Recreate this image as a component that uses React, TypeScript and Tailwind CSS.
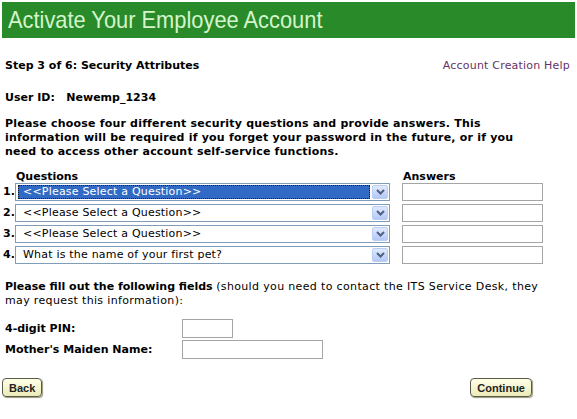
import React from "react";

const font = { fontFamily: '"DejaVu Sans", Verdana, sans-serif' };

function Chevron() {
  return (
    <svg width="9" height="6" viewBox="0 0 9 6">
      <path d="M1 1 L4.5 4.5 L8 1" stroke="#4d6185" strokeWidth="2" fill="none" />
    </svg>
  );
}

function Select({ text, active }: { text: string; active?: boolean }) {
  return (
    <div className="flex h-[18px] w-[375px] items-stretch border border-[#7f9db9] bg-white p-px">
      <div className="flex flex-1 items-center pl-[1px]">
        <div
          className={
            active
              ? "flex h-full w-full items-center border border-dotted border-[#1a1a1a] bg-[#316ac5] pl-[4px] tracking-[0.2px] text-white"
              : "flex h-full w-full items-center pl-[5px] tracking-[0.2px] text-black"
          }
        >
          {text}
        </div>
      </div>
      <div className="ml-[2px] flex w-[16px] items-center justify-center rounded-[2px] border border-[#b9cdf5] bg-gradient-to-b from-[#e1eafe] to-[#b4c8f6]">
        <Chevron />
      </div>
    </div>
  );
}

function Input({ w }: { w: string }) {
  return <div className={`h-[18px] border border-[#a5a5a5] bg-white ${w}`} />;
}

export default function App() {
  const qs = [
    "<<Please Select a Question>>",
    "<<Please Select a Question>>",
    "<<Please Select a Question>>",
    "What is the name of your first pet?",
  ];
  return (
    <div className="h-[419px] w-[577px] bg-white text-[11px] leading-[14px] text-black" style={font}>
      <div className="px-[2px] pt-[2px]">
        <div
          className="flex h-[36px] items-center overflow-hidden bg-[#288a28] pl-[6px] text-[#d4f5cc]"
          style={{ fontFamily: '"Liberation Sans", Arial, sans-serif' }}
        >
          <span className="origin-left scale-x-[0.91] whitespace-nowrap text-[24px]">
            Activate Your Employee Account
          </span>
        </div>
      </div>
      <div className="px-[5px]">
        <div className="mt-[21px] flex justify-between">
          <span className="font-bold">Step 3 of 6: Security Attributes</span>
          <span className="pr-[2px] tracking-[0.2px] text-[#663366]">Account Creation Help</span>
        </div>
        <div className="mt-[18px] font-bold">
          User ID:&nbsp;&nbsp;&nbsp;Newemp_1234
        </div>
        <p className="mt-[12px] font-bold tracking-[0.2px]">
          Please choose four different security questions and provide answers. This
          <br />
          information will be required if you forget your password in the future, or if you
          <br />
          need to access other account self-service functions.
        </p>
      </div>
      <div className="mt-[11px] pl-[3px]">
        <div className="flex font-bold leading-[13px]">
          <span className="w-[400px] pl-[13px]">Questions</span>
          <span>Answers</span>
        </div>
        <div className="flex flex-col gap-[3px]">
          {qs.map((q, i) => (
            <div key={i} className="flex items-center">
              <span className="w-[12px] font-bold">{i + 1}.</span>
              <Select text={q} active={i === 0} />
              <div className="ml-[12px]">
                <Input w="w-[141px]" />
              </div>
            </div>
          ))}
        </div>
      </div>
      <div className="px-[5px]">
        <p className="mt-[16px]">
          <b>Please fill out the following fields</b>{" "}
          <span className="tracking-[0.35px]">(should you need to contact the ITS Service Desk, they</span>
          <br />
          <span className="tracking-[0.35px]">may request this information):</span>
        </p>
        <div className="mt-[11px] flex items-center">
          <span className="w-[177px] font-bold">4-digit PIN:</span>
          <div className="h-[19px] w-[51px] border border-[#a5a5a5] bg-white" />
        </div>
        <div className="mt-[2px] flex items-center">
          <span className="w-[177px] font-bold">Mother's Maiden Name:</span>
          <div className="h-[19px] w-[141px] border border-[#a5a5a5] bg-white" />
        </div>
      </div>
      <div className="mt-[19px] flex justify-between pl-[2px] pr-[45px]">
        <Btn label="Back" />
        <Btn label="Continue" />
      </div>
    </div>
  );
}

function Btn({ label }: { label: string }) {
  return (
    <div
      className="flex h-[19px] items-center rounded-[4px] border border-[#5a5a4a] bg-gradient-to-b from-[#ffffe8] to-[#ecebb8] px-[6px] text-[11px] font-bold text-[#222] shadow-[1px_1px_1px_#9a9a80]"
      style={{ fontFamily: '"Liberation Sans", Arial, sans-serif' }}
    >
      {label}
    </div>
  );
}
